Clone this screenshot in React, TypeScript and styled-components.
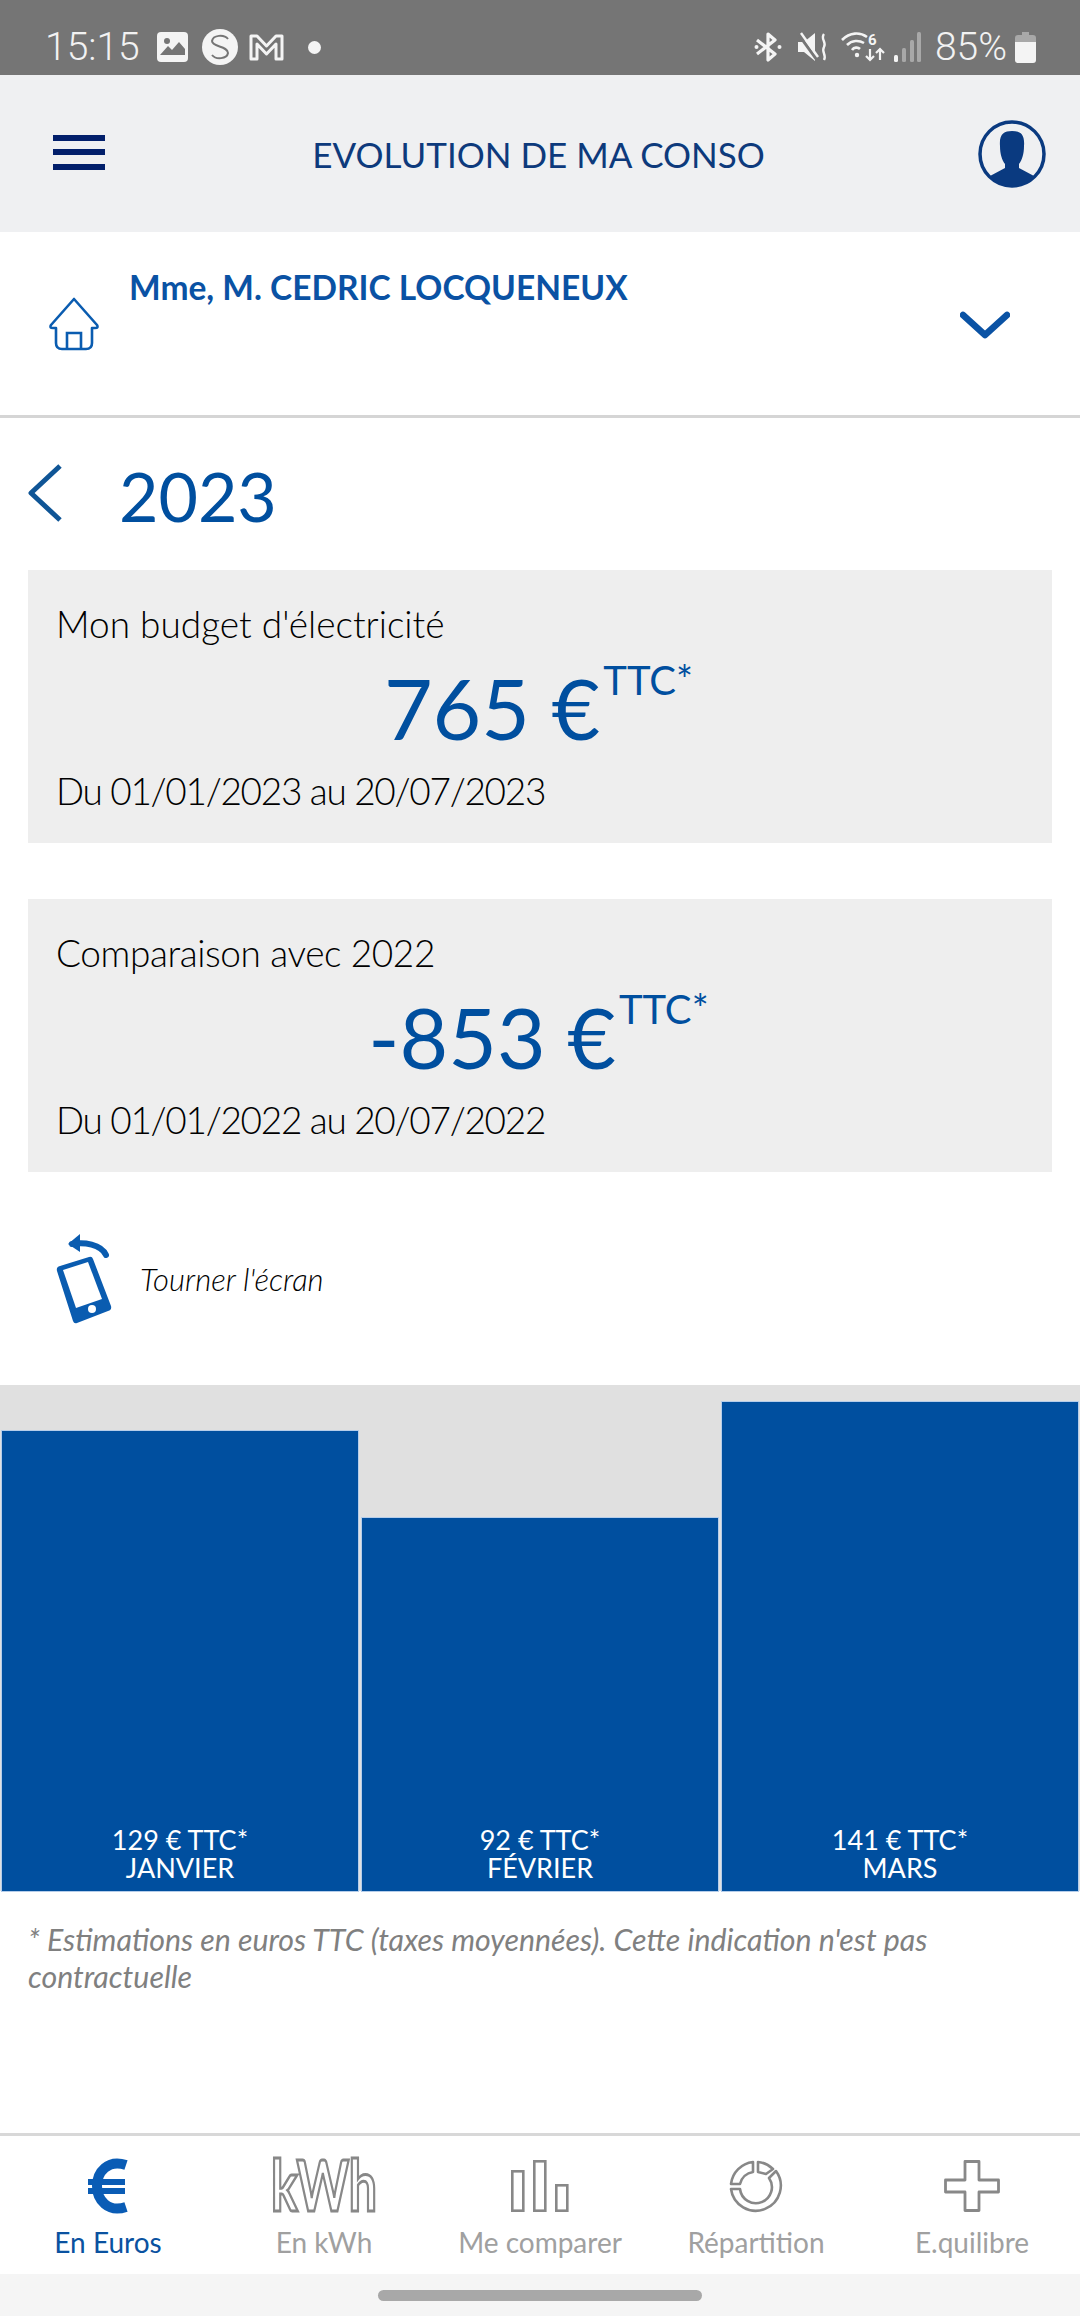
import React from "react";
import styled, { createGlobalStyle } from "styled-components";

const GlobalStyle = createGlobalStyle`
  html, body {
    margin: 0;
    padding: 0;
    background: #fff;
  }
  * {
    box-sizing: border-box;
  }
`;

const BLUE = "#004f9f";

const Page = styled.div`
  width: 1080px;
  height: 2316px;
  display: flex;
  flex-direction: column;
  overflow: hidden;
  font-family: Lato, "Open Sans", sans-serif;
  background: #fff;
`;

const StatusBar = styled.div`
  height: 75px;
  flex-shrink: 0;
  background: #757575;
  display: flex;
  align-items: center;
  justify-content: space-between;
  padding: 19px 44px 0 45px;
  font-family: Roboto, sans-serif;
  font-size: 39px;
  color: #f2f2f2;
`;

const StatusGroup = styled.div`
  display: flex;
  align-items: center;
`;

const StatusIcon = styled.svg<{ $ml: number }>`
  display: block;
  margin-left: ${({ $ml }) => $ml}px;
  flex-shrink: 0;
`;

const StatusText = styled.span<{ $ml?: number }>`
  margin-left: ${({ $ml }) => $ml ?? 0}px;
  line-height: 40px;
  font-weight: 300;
`;

const TopBar = styled.header`
  height: 157px;
  flex-shrink: 0;
  background: #eff0f2;
  display: flex;
  align-items: center;
  justify-content: space-between;
  padding: 0 34px 0 53px;
  position: relative;
`;

const Burger = styled.div`
  width: 52px;
  height: 35px;
  margin-top: -3px;
  display: flex;
  flex-direction: column;
  justify-content: space-between;

  span {
    display: block;
    height: 6px;
    background: #021f6b;
  }
`;

const TopTitle = styled.h1`
  margin: 0;
  font-size: 35px;
  font-weight: 400;
  color: #0d3a7c;
  white-space: nowrap;
  flex: 1;
  text-align: center;
  padding-right: 6px;
`;

const AccountRow = styled.div`
  height: 186px;
  flex-shrink: 0;
  border-bottom: 3px solid #d5d5d5;
  display: flex;
  align-items: center;
  padding: 0 70px 0 48px;
`;

const AccountName = styled.div`
  flex: 1;
  align-self: flex-start;
  margin: 34px 0 0 29px;
  font-size: 33.5px;
  line-height: 42px;
  font-weight: 700;
  color: #0a52a4;
`;

const YearRow = styled.div`
  height: 152px;
  flex-shrink: 0;
  display: flex;
  align-items: center;
  padding: 3px 0 0 28px;
  gap: 57px;
`;

const BackIcon = styled.svg`
  display: block;
  margin-top: -5px;
`;

const YearLabel = styled.div`
  font-size: 68px;
  line-height: 80px;
  color: ${BLUE};
`;

const Cards = styled.div`
  display: flex;
  flex-direction: column;
  gap: 56px;
  padding: 0 28px;
`;

const Card = styled.section`
  height: 273px;
  background: #eeeeee;
  padding: 32px 28px 0;
`;

const CardLine = styled.div<{ $tracking?: number }>`
  font-size: 37px;
  line-height: 44px;
  font-weight: 300;
  color: #000;
  letter-spacing: ${({ $tracking }) => $tracking ?? 0}px;
`;

const Amount = styled.div`
  margin: 0;
  height: 123px;
  display: flex;
  justify-content: center;
  align-items: flex-start;
  font-size: 84px;
  line-height: 100px;
  color: ${BLUE};
  white-space: nowrap;
  padding: 12px 3px 0 0;
`;

const Ttc = styled.span`
  font-size: 40px;
  line-height: 40px;
  margin: 2px 0 0 3px;
`;

const RotateRow = styled.div`
  height: 213px;
  flex-shrink: 0;
  display: flex;
  align-items: center;
  padding-left: 56px;
  gap: 28px;
`;

const RotateText = styled.span`
  font-size: 31px;
  font-weight: 300;
  font-style: italic;
  color: #000;
`;

const Chart = styled.div`
  height: 506px;
  flex-shrink: 0;
  background: #e0e0e0;
  display: grid;
  grid-template-columns: repeat(3, 1fr);
  align-items: end;
  gap: 4px;
  padding: 0 2px;
`;

const Bar = styled.div`
  background: ${BLUE};
  box-shadow: 0 0 0 1px #b5cdea;
  color: #fff;
  display: flex;
  flex-direction: column;
  justify-content: flex-end;
  align-items: center;
  font-size: 27px;
  line-height: 28px;
  padding-bottom: 9px;
`;

const Note = styled.p`
  margin: 0;
  padding: 30px 28px 0;
  font-size: 30.3px;
  line-height: 37px;
  font-style: italic;
  color: #808080;
  flex: 1;
`;

const BottomNav = styled.nav`
  height: 141px;
  flex-shrink: 0;
  border-top: 3px solid #d8d8d8;
  display: grid;
  grid-template-columns: repeat(5, 1fr);
  padding-top: 24px;
`;

const NavItem = styled.div<{ $active?: boolean }>`
  display: flex;
  flex-direction: column;
  align-items: center;
  font-size: 28px;
  line-height: 34px;
  color: ${({ $active }) => ($active ? "#0a52a0" : "#a0a0a0")};
`;

const NavIcon = styled.svg<{ $mb?: number }>`
  display: block;
  overflow: visible;
  margin-bottom: ${({ $mb }) => $mb ?? 13}px;
`;

const GestureBar = styled.div`
  height: 42px;
  flex-shrink: 0;
  background: #f5f5f5;
  display: flex;
  justify-content: center;
  padding-top: 16px;
`;

const GesturePill = styled.div`
  width: 324px;
  height: 11px;
  border-radius: 6px;
  background: #a8a8a8;
`;

const bars = [
  { value: "129 € TTC*", month: "JANVIER", height: 460 },
  { value: "92 € TTC*", month: "FÉVRIER", height: 373 },
  { value: "141 € TTC*", month: "MARS", height: 489 },
];

const summaries = [
  { label: "Mon budget d'électricité", labelTracking: 0, amount: "765 €", range: "Du 01/01/2023 au 20/07/2023" },
  { label: "Comparaison avec 2022", labelTracking: -0.4, amount: "-853 €", range: "Du 01/01/2022 au 20/07/2022" },
];

const ICON_GREY = "#888888";

function StatusLeftIcons() {
  return (
    <>
      <StatusIcon $ml={17} width="31" height="30" viewBox="0 0 31 30">
        <rect width="31" height="30" rx="4" fill="#f4f4f4" />
        <circle cx="10" cy="9" r="3" fill="#757575" />
        <path d="M3 23 L11 14 L15 18 L22 10 L28 17 V23 Z" fill="#757575" />
      </StatusIcon>
      <StatusIcon $ml={14} width="36" height="36" viewBox="0 0 36 36">
        <circle cx="18" cy="18" r="18" fill="#f4f4f4" />
        <path
          d="M26 10 C22 5 11 6 10 12 C10 18 26 17 26 24 C25 30 14 31 10 26"
          fill="none"
          stroke="#757575"
          strokeWidth="2"
        />
      </StatusIcon>
      <StatusIcon $ml={11} width="35" height="28" viewBox="0 0 35 28">
        <path
          d="M2 3 H8 L17.5 13 L27 3 H33 V26 H27 V11 L17.5 21 L8 11 V26 H2 Z"
          fill="none"
          stroke="#f4f4f4"
          strokeWidth="3"
          strokeLinejoin="round"
        />
      </StatusIcon>
      <StatusIcon $ml={24} width="13" height="13" viewBox="0 0 13 13">
        <circle cx="6.5" cy="6.5" r="6.5" fill="#f4f4f4" />
      </StatusIcon>
    </>
  );
}

function StatusRightIcons() {
  return (
    <>
      <StatusIcon $ml={0} width="28" height="30" viewBox="0 0 28 30">
        <path
          d="M3 8 L21 22 L14 28 V2 L21 8 L3 22"
          fill="none"
          stroke="#f4f4f4"
          strokeWidth="3.2"
          strokeLinejoin="round"
        />
        <circle cx="2.5" cy="15" r="2" fill="#f4f4f4" />
        <circle cx="25.5" cy="15" r="2" fill="#f4f4f4" />
      </StatusIcon>
      <StatusIcon $ml={16} width="30" height="30" viewBox="0 0 30 30">
        <path d="M0 10 H6 L17 1 V29 L6 20 H0 Z" fill="#f4f4f4" />
        <path d="M1 3 L19 28" stroke="#757575" strokeWidth="3" />
        <path d="M3 1 L20 25" stroke="#f4f4f4" strokeWidth="2.4" />
        <path
          d="M26 2 C22 7 29 10 26 15 C23 20 29 23 26 28"
          fill="none"
          stroke="#f4f4f4"
          strokeWidth="2.4"
        />
      </StatusIcon>
      <StatusIcon $ml={13} width="44" height="30" viewBox="0 0 44 30">
        <path d="M1 8 C9 0 19 0 26 5" fill="none" stroke="#f4f4f4" strokeWidth="2.6" />
        <path d="M6 13 C11 8 18 8 23 11" fill="none" stroke="#f4f4f4" strokeWidth="2.6" />
        <path d="M11 18 C13 15 17 15 19 17" fill="none" stroke="#f4f4f4" strokeWidth="2.6" />
        <circle cx="16" cy="23" r="2.2" fill="#f4f4f4" />
        <text x="27" y="13" fontFamily="Roboto, sans-serif" fontSize="15" fontWeight="700" fill="#f4f4f4">
          6
        </text>
        <path d="M29 17 V28 M25 24 L29 28 L33 24" fill="none" stroke="#f4f4f4" strokeWidth="2.2" />
        <path d="M39 28 V17 M35 21 L39 17 L43 21" fill="none" stroke="#f4f4f4" strokeWidth="2.2" />
      </StatusIcon>
      <StatusIcon $ml={9} width="27" height="30" viewBox="0 0 27 30">
        <rect x="0" y="23" width="4" height="7" rx="1.5" fill="#f4f4f4" />
        <rect x="8" y="16" width="4" height="14" rx="1.5" fill="#a8a8a8" />
        <rect x="16" y="8" width="4" height="22" rx="1.5" fill="#a8a8a8" />
        <rect x="23" y="0" width="4" height="30" rx="1.5" fill="#a8a8a8" />
      </StatusIcon>
      <StatusText $ml={14}>85%</StatusText>
      <StatusIcon $ml={8} width="21" height="31" viewBox="0 0 21 31">
        <path d="M7 0 H14 V3 H18 Q21 3 21 6 V10 H0 V6 Q0 3 3 3 H7 Z" fill="#a8a8a8" />
        <path d="M0 10 H21 V28 Q21 31 18 31 H3 Q0 31 0 28 Z" fill="#f4f4f4" />
      </StatusIcon>
    </>
  );
}

function Avatar() {
  return (
    <svg width="68" height="68" viewBox="0 0 68 68">
      <defs>
        <clipPath id="avatar-clip">
          <circle cx="34" cy="34" r="32" />
        </clipPath>
      </defs>
      <circle cx="34" cy="34" r="32" fill="none" stroke="#0a3a80" strokeWidth="3.5" />
      <g clipPath="url(#avatar-clip)">
        <path
          d="M22 26 C21 14 26 11 34 11 C42 11 47 14 46 26 C46 34 44 40 41 44 V48 L56 56 V70 H12 V56 L27 48 V44 C24 40 22 34 22 26 Z"
          fill="#0a3a80"
        />
      </g>
    </svg>
  );
}

function HouseIcon() {
  return (
    <svg width="52" height="54" viewBox="0 0 52 54" style={{ flexShrink: 0 }}>
      <path
        d="M26 2 L3 28 Q1 31 5 31 H8 V46 Q8 52 14 52 H38 Q44 52 44 46 V31 H47 Q51 31 49 28 Z"
        fill="none"
        stroke="#0a5cb0"
        strokeWidth="2.6"
        strokeLinejoin="round"
      />
      <path d="M19 52 V36 H33 V52" fill="none" stroke="#0a5cb0" strokeWidth="2.6" />
    </svg>
  );
}

function ChevronDown() {
  return (
    <svg width="50" height="28" viewBox="0 0 50 28" style={{ marginTop: 3 }}>
      <path
        d="M3 4 L25 24 L47 4"
        fill="none"
        stroke="#0a52a4"
        strokeWidth="6.5"
        strokeLinecap="round"
        strokeLinejoin="round"
      />
    </svg>
  );
}

function BackChevron() {
  return (
    <BackIcon width="34" height="58" viewBox="0 0 34 58">
      <path d="M32 2 L3 29 L32 56" fill="none" stroke="#0f5596" strokeWidth="5" strokeLinejoin="round" />
    </BackIcon>
  );
}

function RotatePhone() {
  return (
    <svg width="56" height="91" viewBox="0 0 56 91">
      <path d="M24 1 L12 11 L24 19" fill="#0a5cb0" />
      <path
        d="M16 11 C28 9 45 11 50 22"
        fill="none"
        stroke="#0a5cb0"
        strokeWidth="6"
        strokeLinecap="round"
      />
      <path
        d="M4 33 L33 24 Q36 23 37 26 L55 73 Q56 77 52 78 L21 90 Q18 91 17 88 L1 38 Q0 34 4 33 Z"
        fill="#0a5cb0"
      />
      <path d="M7 37 L32 29 L46 66 L20 75 Z" fill="#fff" />
      <circle cx="36" cy="76" r="4" fill="#fff" />
    </svg>
  );
}

function EuroIcon() {
  return (
    <NavIcon width="40" height="52" viewBox="0 0 40 52">
      <path d="M38 5 C20 -1 9 12 9 26 C9 40 20 53 38 47" fill="none" stroke="#0a5cb5" strokeWidth="10" />
      <rect x="0" y="19" width="37" height="6" fill="#0a5cb5" />
      <rect x="0" y="28" width="37" height="6" fill="#0a5cb5" />
      <rect x="15" y="25" width="22" height="3" fill="#fff" />
    </NavIcon>
  );
}

function KwhIcon() {
  return (
    <NavIcon width="110" height="52" viewBox="0 0 110 52">
      <text
        x="2"
        y="51"
        fontFamily="Lato, sans-serif"
        fontSize="70"
        fontWeight="700"
        textLength="106"
        lengthAdjust="spacingAndGlyphs"
        fill="#fff"
        stroke={ICON_GREY}
        strokeWidth="3"
      >
        kWh
      </text>
    </NavIcon>
  );
}

function CompareIcon() {
  return (
    <NavIcon width="58" height="52" viewBox="0 0 58 52">
      <g fill="none" stroke={ICON_GREY} strokeWidth="2.6">
        <rect x="1.3" y="11.3" width="11" height="39.4" />
        <rect x="23.3" y="1.3" width="11" height="49.4" />
        <rect x="45.3" y="25.3" width="11" height="25.4" />
      </g>
    </NavIcon>
  );
}

function ShareIcon() {
  return (
    <NavIcon $mb={11} width="54" height="54" viewBox="0 0 54 54">
      <g fill="none" stroke={ICON_GREY} strokeWidth="2.6" strokeLinejoin="round">
        <path d="M2 29 A25 25 0 1 0 47 11 L40 18 A16 16 0 1 1 11 29 Z" />
        <path d="M2 24 A25 25 0 0 1 24 2 V12 A16 16 0 0 0 11 24 Z" />
        <path d="M29 2 A25 25 0 0 1 44 9 L37 14 L29 12 Z" />
      </g>
    </NavIcon>
  );
}

function PlusIcon() {
  return (
    <NavIcon width="56" height="52" viewBox="0 0 56 52">
      <path
        d="M21 1.5 H35 V20 H54.5 V32 H35 V50.5 H21 V32 H1.5 V20 H21 Z"
        fill="none"
        stroke={ICON_GREY}
        strokeWidth="2.8"
        strokeLinejoin="round"
      />
    </NavIcon>
  );
}

export default function App() {
  return (
    <Page>
      <GlobalStyle />
      <StatusBar>
        <StatusGroup>
          <StatusText>15:15</StatusText>
          <StatusLeftIcons />
        </StatusGroup>
        <StatusGroup>
          <StatusRightIcons />
        </StatusGroup>
      </StatusBar>

      <TopBar>
        <Burger>
          <span />
          <span />
          <span />
        </Burger>
        <TopTitle>EVOLUTION DE MA CONSO</TopTitle>
        <Avatar />
      </TopBar>

      <AccountRow>
        <HouseIcon />
        <AccountName>Mme, M. CEDRIC LOCQUENEUX</AccountName>
        <ChevronDown />
      </AccountRow>

      <YearRow>
        <BackChevron />
        <YearLabel>2023</YearLabel>
      </YearRow>

      <Cards>
        {summaries.map((s) => (
          <Card key={s.label}>
            <CardLine $tracking={s.labelTracking}>{s.label}</CardLine>
            <Amount>
              {s.amount}
              <Ttc>TTC*</Ttc>
            </Amount>
            <CardLine $tracking={-1.3}>{s.range}</CardLine>
          </Card>
        ))}
      </Cards>

      <RotateRow>
        <RotatePhone />
        <RotateText>Tourner l'écran</RotateText>
      </RotateRow>

      <Chart>
        {bars.map((b) => (
          <Bar key={b.month} style={{ height: b.height }}>
            <span>{b.value}</span>
            <span>{b.month}</span>
          </Bar>
        ))}
      </Chart>

      <Note>* Estimations en euros TTC (taxes moyennées). Cette indication n'est pas contractuelle</Note>

      <BottomNav>
        <NavItem $active>
          <EuroIcon />
          En Euros
        </NavItem>
        <NavItem>
          <KwhIcon />
          En kWh
        </NavItem>
        <NavItem>
          <CompareIcon />
          Me comparer
        </NavItem>
        <NavItem>
          <ShareIcon />
          Répartition
        </NavItem>
        <NavItem>
          <PlusIcon />
          E.quilibre
        </NavItem>
      </BottomNav>

      <GestureBar>
        <GesturePill />
      </GestureBar>
    </Page>
  );
}
